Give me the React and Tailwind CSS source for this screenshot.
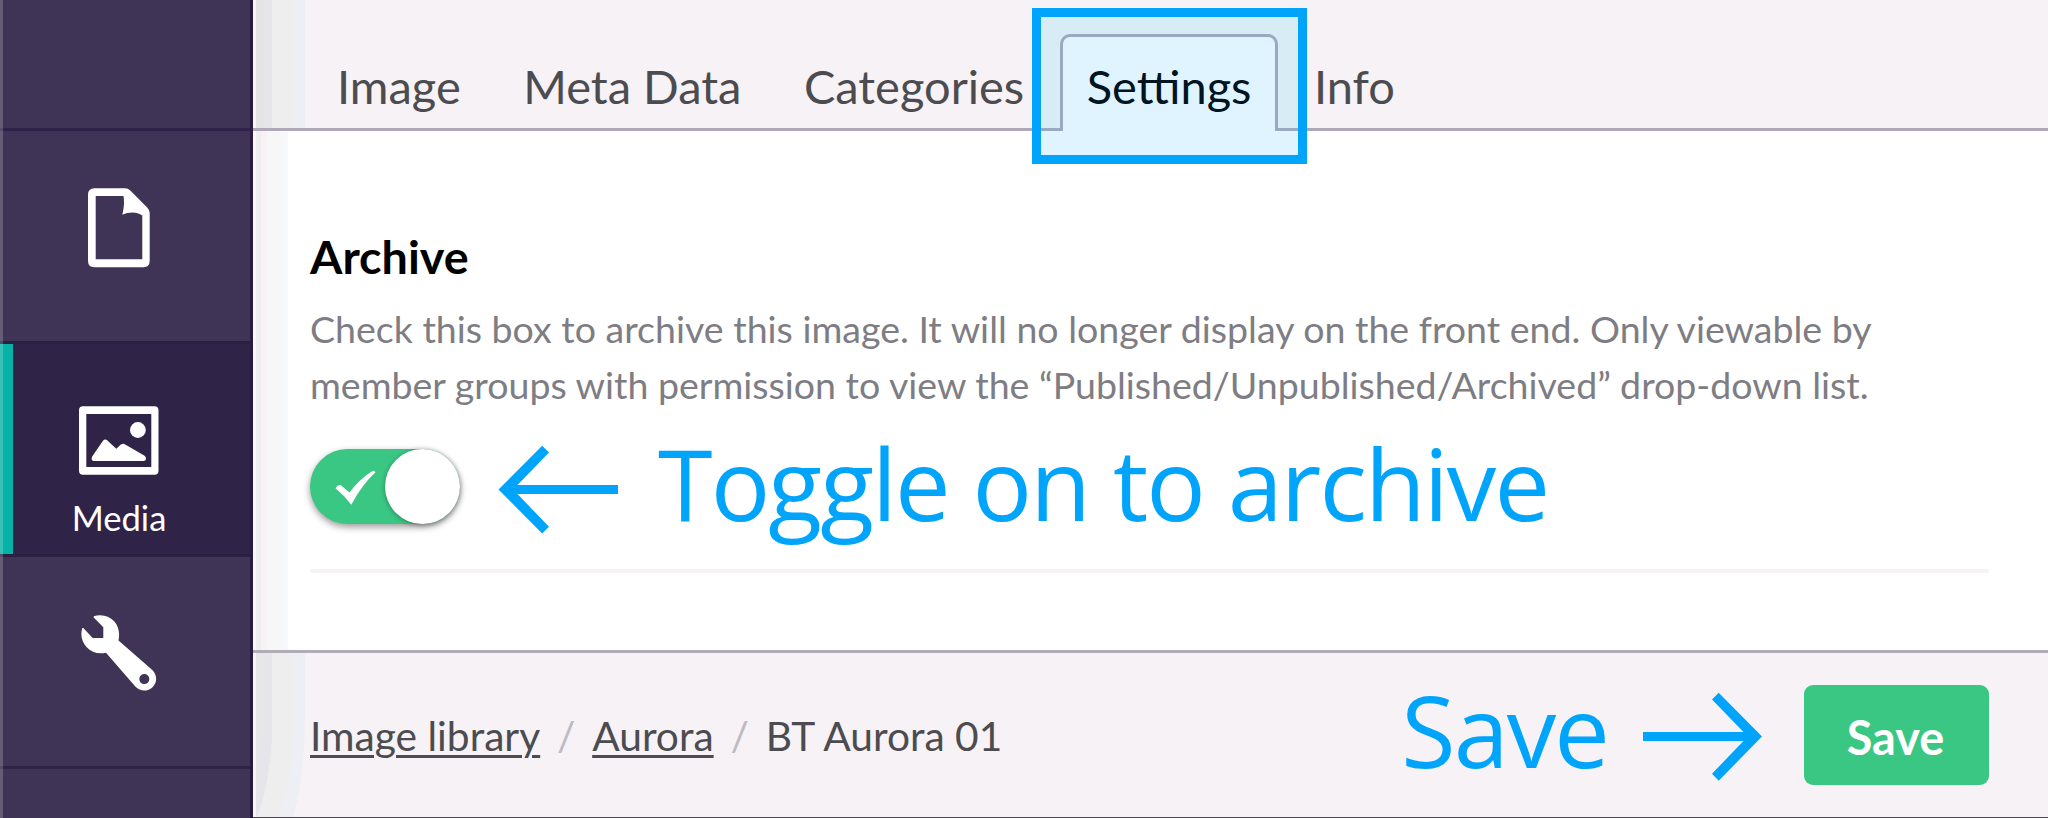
const tabs = ['Image', 'Meta Data', 'Categories', 'Settings', 'Info'];

function DocumentIcon() {
  return (
    <svg width="62" height="80" viewBox="88 188 62 80" fill="#fff">
      <path
        fillRule="evenodd"
        d="M94.5 188.3H125Q128 188.3 130.300 190.600L147.200 207.400Q149.700 210 149.700 213V260.800Q149.700 267.300 143.200 267.300H94.500Q88 267.300 88 260.800V194.800Q88 188.300 94.500 188.300ZM95.700 196V259.300H142.300V215.500C137 211.500 129.500 211.500 122.300 214.700C124 208 124.500 202 123.500 196Z"
      />
    </svg>
  );
}

function PictureIcon() {
  return (
    <svg width="80" height="69" viewBox="79 406 80 69" fill="#fff">
      <path
        fillRule="evenodd"
        d="M83 406.300H154.500Q158.500 406.300 158.500 410.300V470.700Q158.500 474.700 154.500 474.700H83Q79 474.700 79 470.700V410.300Q79 406.300 83 406.300ZM86.300 414V467H151.300V414Z"
      />
      <circle cx="137.900" cy="430" r="7.900" />
      <path d="M92.200 456.500L102.800 441Q105 438.300 107.400 440.600L116.300 448.700L120.600 444.800Q122.700 443 125.200 444.400L144.200 455.600Q146.300 457 146 459Q145.700 461 143.500 461H94Q91.600 461 91.600 459Q91.600 457.500 92.200 456.500Z" />
    </svg>
  );
}

function WrenchIcon() {
  return (
    <svg width="77" height="77" viewBox="80 614 77 77" fill="#fff">
      <path
        fillRule="evenodd"
        d="M93.700 616.200C101 613.800 109 615.500 114.200 621.200C118.800 626.200 120 633.500 118.500 640.500L152.300 670C157.500 675 157.300 682.500 152.500 687.200C147.500 692 140 691.500 135.300 686.500L106 652.700C98.500 654.500 91.500 652.500 86.500 647C81.500 641.500 80.300 634.500 82.300 628L83.300 628L92.700 638H103.300V627.300L93.700 617.500ZM144.300 674.100A5 5 0 1 0 144.300 684.100A5 5 0 1 0 144.300 674.100Z"
      />
    </svg>
  );
}

function Sidebar() {
  return (
    <aside className="relative flex h-full w-[253px] shrink-0 flex-col border-r-[3px] border-[#2b1b41] bg-[#403456]">
      <div className="h-[131px] border-b-[3px] border-[#2f2148]" />
      <div className="flex h-[210px] justify-center pr-3 pt-[57px]">
        <DocumentIcon />
      </div>
      <div className="flex h-[216px] border-y-[3px] border-[#2b1f42] bg-[#2f2347]">
        <div className="w-[13px] bg-[#06b1a5]" />
        <div className="flex grow flex-col items-center pr-[25px] pt-[62px]">
          <PictureIcon />
          <span className="mt-[21px] text-[34.6px] leading-[44px] text-white">Media</span>
        </div>
      </div>
      <div className="flex h-[212px] justify-center border-b-[3px] border-[#2f2148] pr-[14px] pt-[57px]">
        <WrenchIcon />
      </div>
      <div className="absolute inset-y-0 left-0 w-[3px] bg-white/20" />
    </aside>
  );
}

function EdgeBands() {
  return (
    <div className="flex h-full">
      <div className="w-[3px] bg-[#f7f5f7]" />
      <div className="w-2 bg-[#e4e4e5]" />
      <div className="w-2 bg-[#e6e5ea]" />
      <div className="w-[22px] bg-[#eeeeee]" />
      <div className="w-[11px] bg-[#eeeff4]" />
    </div>
  );
}

function FooterBands() {
  return (
    <svg width="52" height="164" viewBox="0 0 52 164">
      <path d="M0 0H52V65Q51 130 40 164H0Z" fill="#eeeff4" />
      <path d="M0 0H41V65Q40 120 26 164H0Z" fill="#eeeeee" />
      <path d="M0 0H19V85Q16 135 4 164H0Z" fill="#e6e5ea" />
      <path d="M0 0H11V40Q10 110 3 145H0Z" fill="#e7e7e8" />
      <path d="M0 0H3V164H0Z" fill="#f7f5f7" />
    </svg>
  );
}

function Toggle() {
  return (
    <div className="mt-4 flex h-[75px] w-[150px] shrink-0 justify-end rounded-full bg-[#3ac783] shadow-[0_3px_7px_rgba(0,0,0,0.4)]">
      <svg className="mr-[9px] mt-[21px]" width="41" height="35" viewBox="334.500 470 41 35" fill="#fff">
        <path d="M335 488.200Q336.500 485.200 339.800 484.800L349 492.500Q358 480 371.500 471.200Q374 470 375 472.300Q362 484 350.800 504.700Q344 495.500 335 488.200Z" />
      </svg>
      <div className="h-[75px] w-[75px] rounded-full bg-white shadow-[0_1px_5px_rgba(0,0,0,0.35)]" />
    </div>
  );
}

export default function App() {
  return (
    <div className="relative flex h-[818px] w-[2048px] overflow-hidden bg-white font-['Lato',sans-serif]">
      <Sidebar />
      <div className="flex min-w-0 grow flex-col">
        <header className="flex h-[131px] border-b-[3px] border-[#b0a8b8] bg-[#f6f2f6]">
          <div className="absolute left-[1041px] top-[17px] h-[111px] w-[257px] bg-[#f6f6f4]" />
          <EdgeBands />
          <nav className="relative -mb-[3px] ml-[5px] flex items-stretch gap-[8.500px] pt-[34px] text-[47px] leading-[56px] text-[#4c4c50]">
            {tabs.map((t) => (
              <div
                key={t}
                className={
                  t === 'Settings'
                    ? 'rounded-t-[10px] border-x-[3px] border-t-[3px] border-[#b0a8b8] bg-white px-6 pt-[21px] text-black'
                    : 'border-x-[3px] border-t-[3px] border-transparent px-6 pt-[21px]'
                }
              >
                {t}
              </div>
            ))}
          </nav>
        </header>

        <main className="flex h-[519px]">
          <div className="flex">
            <div className="w-[3px] bg-[#f8f7f9]" />
            <div className="w-[5px] bg-[#eeeeee]" />
            <div className="w-[6px] bg-[#f6f2f5]" />
            <div className="w-[15px] bg-[#f7f7f7]" />
            <div className="w-[6px] bg-[#f6f8fb]" />
          </div>
          <section className="ml-[22px] flex w-[1679px] flex-col pt-[97px]">
            <h2 className="text-[46.700px] font-bold leading-[56px] text-black">Archive</h2>
            <p className="mt-[17px] whitespace-nowrap text-[37.530px] leading-[56px] text-[#7e7d83]">
              Check this box to archive this image. It will no longer display on the front end. Only viewable by
              <br />
              member groups with permission to view the “Published/Unpublished/Archived” drop-down list.
            </p>
            <div className="mt-5 flex h-[136px] items-start">
              <Toggle />
              <svg className="ml-[38px] mt-3 shrink-0" width="120" height="89" viewBox="498 445 120 89" fill="#00a5fb">
                <path d="M498.500 489.500L542.200 445.700L549 452.500L517.500 485H618V494H517.500L549 526.800L542.200 533.500Z" />
              </svg>
              <span className="ml-[40px] whitespace-nowrap font-['Open_Sans',sans-serif] text-[99px] leading-[100px] tracking-[-1.9px] text-[#00a5fb]">
                Toggle on to archive
              </span>
            </div>
            <div className="h-1 rounded-sm bg-[#f6f2f5]" />
          </section>
        </main>

        <footer className="flex h-[168px] border-b border-t-[3px] border-b-[#4a4750] border-t-[#b0adb8] bg-[#f6f2f6]">
          <FooterBands />
          <div className="ml-[5px] mt-[59px] flex h-12 whitespace-nowrap text-[40.700px] leading-[48px] text-[#4c4c50]">
            <a className="underline decoration-[3px] underline-offset-[4px]">Image library</a>
            <span className="w-[52px] text-center text-[#bdbbc0]">/</span>
            <a className="underline decoration-[3px] underline-offset-[4px]">Aurora</a>
            <span className="w-[52px] text-center text-[#bdbbc0]">/</span>
            <span>BT Aurora 01</span>
          </div>
          <div className="ml-auto mr-[59px] flex items-start">
            <span className="mt-[27px] font-['Open_Sans',sans-serif] text-[99px] leading-[100px] tracking-[-1.9px] text-[#00a5fb]">
              Save
            </span>
            <svg className="ml-[35px] mt-[39px] shrink-0" width="120" height="89" viewBox="1643 692 120 89" fill="#00a5fb">
              <path d="M1762 736.500L1718.700 692.700L1712 699.500L1743.500 731.900H1643V741H1743.500L1712 773.700L1718.700 780.700Z" />
            </svg>
            <button className="ml-[41px] mt-[32px] h-[100px] w-[185px] rounded-[9px] bg-[#3ac783] pr-0.5 pt-[3px] text-[46.800px] font-bold leading-[56px] text-white">
              Save
            </button>
          </div>
        </footer>
      </div>
      <div className="absolute left-[1032px] top-2 h-[156px] w-[275px] border-[9px] border-[#00a5fb] bg-[#00a9ff]/[0.125]" />
    </div>
  );
}
